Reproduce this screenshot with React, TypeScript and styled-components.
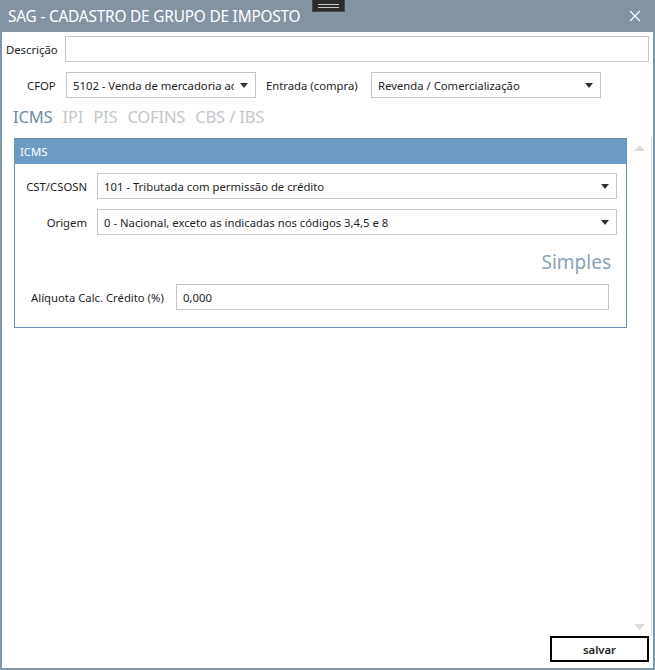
import React from "react";
import styled, { createGlobalStyle } from "styled-components";

const GlobalStyle = createGlobalStyle`
  html, body {
    margin: 0;
    padding: 0;
    background: #ffffff;
  }
  body {
    font-family: "Segoe UI", "Noto Sans", "Open Sans", sans-serif;
    font-size: 11.3px;
    color: #1e1e1e;
  }
`;

const Window = styled.div`
  position: relative;
  width: 655px;
  height: 670px;
  box-sizing: border-box;
  border: 2px solid #7d97ab;
  border-top: none;
  display: flex;
  flex-direction: column;
  background: #ffffff;
`;

const TitleBar = styled.div`
  height: 32px;
  margin: 0 -2px;
  background: #8393a1;
  display: flex;
  align-items: center;
  justify-content: space-between;
  padding: 0 14px 0 8px;
  color: #ffffff;
  font-size: 15.4px;
  letter-spacing: -0.2px;
  flex-shrink: 0;
`;

const Grip = styled.div`
  position: absolute;
  top: 0;
  left: 310px;
  width: 33px;
  height: 12px;
  background: #2b2b2b;
  border: 1px solid #4a4a4a;
  border-top: none;
  box-sizing: border-box;
  display: flex;
  flex-direction: column;
  justify-content: center;
  gap: 2px;
  padding: 0 5px;

  span {
    display: block;
    height: 1px;
    background: #c9c9c9;
  }
`;

const CloseIcon = () => (
  <svg width="12" height="12" viewBox="0 0 12 12">
    <path d="M1 1L11 11M11 1L1 11" stroke="#ffffff" strokeWidth="1.1" />
  </svg>
);

const Row = styled.div<{ $top: number; $left: number; $gap?: number }>`
  display: flex;
  align-items: center;
  margin-top: ${(p) => p.$top}px;
  padding-left: ${(p) => p.$left}px;
  gap: ${(p) => p.$gap ?? 9}px;
`;

const Label = styled.span<{ $width?: number }>`
  white-space: nowrap;
  ${(p) => (p.$width ? `width: ${p.$width}px; flex-shrink: 0;` : "")}
`;

const TextBox = styled.div<{ $width?: number }>`
  height: 26px;
  box-sizing: border-box;
  border: 1px solid #c6c6c6;
  background: #ffffff;
  display: flex;
  align-items: center;
  padding: 0 6px;
  ${(p) => (p.$width ? `width: ${p.$width}px; flex-shrink: 0;` : "flex: 1;")}
`;

const Combo = styled(TextBox)`
  justify-content: space-between;
  padding: 0 7px 0 6px;
  overflow: hidden;
  white-space: nowrap;

  span {
    flex: 1;
    min-width: 0;
    overflow: hidden;
  }
`;

const Caret = () => (
  <svg width="8" height="5" viewBox="0 0 8 5" style={{ flexShrink: 0, marginLeft: 6 }}>
    <path d="M0 0H8L4 5Z" fill="#333" />
  </svg>
);

const Tabs = styled.div`
  display: flex;
  gap: 10px;
  padding-left: 11px;
  margin-top: 6px;
  font-size: 16.6px;
  letter-spacing: -0.2px;
  height: 24px;
  align-items: center;
`;

const Tab = styled.span<{ $active?: boolean }>`
  color: ${(p) => (p.$active ? "#6d8ca6" : "#c4c7ca")};
`;

const ScrollArea = styled.div`
  flex: 1;
  display: flex;
  margin-top: 10px;
`;

const ScrollContent = styled.div`
  flex: 1;
  padding: 0 0 0 12px;
`;

const ScrollBar = styled.div`
  width: 24px;
  display: flex;
  flex-direction: column;
  justify-content: space-between;
  align-items: center;
  padding: 7px 0 6px 0;
  margin-right: 1px;
  border-right: 1px solid #d6e3ec;
`;

const Arrow = ({ up }: { up?: boolean }) => (
  <svg width="11" height="6" viewBox="0 0 11 6">
    <path d={up ? "M0 6H11L5.5 0Z" : "M0 0H11L5.5 6Z"} fill="#dcdcdc" />
  </svg>
);

const GroupBox = styled.div`
  width: 613px;
  height: 190px;
  box-sizing: border-box;
  border: 1px solid #6a8fae;
  display: flex;
  flex-direction: column;
`;

const GroupHeader = styled.div`
  height: 25px;
  background: #6c9cc5;
  color: #ffffff;
  display: flex;
  align-items: center;
  padding-left: 5px;
  flex-shrink: 0;
`;

const FieldRow = styled.div<{ $top: number }>`
  display: grid;
  grid-template-columns: 72px 1fr;
  gap: 10px;
  align-items: center;
  margin-top: ${(p) => p.$top}px;
  padding-right: 9px;
`;

const FieldLabel = styled.span`
  text-align: right;
`;

const Simples = styled.div`
  text-align: right;
  padding-right: 15px;
  margin-top: 14px;
  font-size: 19px;
  color: #8aa0b5;
  height: 26px;
  line-height: 26px;
`;

const Footer = styled.div`
  display: flex;
  justify-content: flex-end;
  padding: 0 4px 6px 0;
`;

const SaveButton = styled.button`
  width: 99px;
  height: 26px;
  box-sizing: border-box;
  border: 2px solid #000000;
  background: #ffffff;
  font-family: inherit;
  font-size: 11.3px;
  font-weight: 600;
  color: #1e1e1e;
  cursor: pointer;
`;

export default function App() {
  return (
    <>
      <GlobalStyle />
      <Window>
        <TitleBar>
          <span>SAG - CADASTRO DE GRUPO DE IMPOSTO</span>
          <CloseIcon />
        </TitleBar>
        <Grip>
          <span />
          <span />
        </Grip>

        <Row $top={4} $left={4} $gap={7}>
          <Label>Descrição</Label>
          <TextBox style={{ marginRight: 4 }} />
        </Row>

        <Row $top={10} $left={25}>
          <Label $width={30}>CFOP</Label>
          <Combo $width={190}>
            <span>5102 - Venda de mercadoria adquirida</span>
            <Caret />
          </Combo>
          <Label $width={96} style={{ marginLeft: 1 }}>
            Entrada (compra)
          </Label>
          <Combo $width={230}>
            <span>Revenda / Comercialização</span>
            <Caret />
          </Combo>
        </Row>

        <Tabs>
          <Tab $active>ICMS</Tab>
          <Tab>IPI</Tab>
          <Tab>PIS</Tab>
          <Tab>COFINS</Tab>
          <Tab>CBS / IBS</Tab>
        </Tabs>

        <ScrollArea>
          <ScrollContent>
            <GroupBox>
              <GroupHeader>ICMS</GroupHeader>
              <FieldRow $top={9}>
                <FieldLabel>CST/CSOSN</FieldLabel>
                <Combo>
                  <span>101 - Tributada com permissão de crédito</span>
                  <Caret />
                </Combo>
              </FieldRow>
              <FieldRow $top={10}>
                <FieldLabel>Origem</FieldLabel>
                <Combo>
                  <span>0 - Nacional, exceto as indicadas nos códigos 3,4,5 e 8</span>
                  <Caret />
                </Combo>
              </FieldRow>
              <Simples>Simples</Simples>
              <Row $top={9} $left={16} $gap={10} style={{ paddingRight: 17 }}>
                <Label $width={135}>Alíquota Calc. Crédito (%)</Label>
                <TextBox>0,000</TextBox>
              </Row>
            </GroupBox>
          </ScrollContent>
          <ScrollBar>
            <Arrow up />
            <Arrow />
          </ScrollBar>
        </ScrollArea>

        <Footer>
          <SaveButton>salvar</SaveButton>
        </Footer>
      </Window>
    </>
  );
}
